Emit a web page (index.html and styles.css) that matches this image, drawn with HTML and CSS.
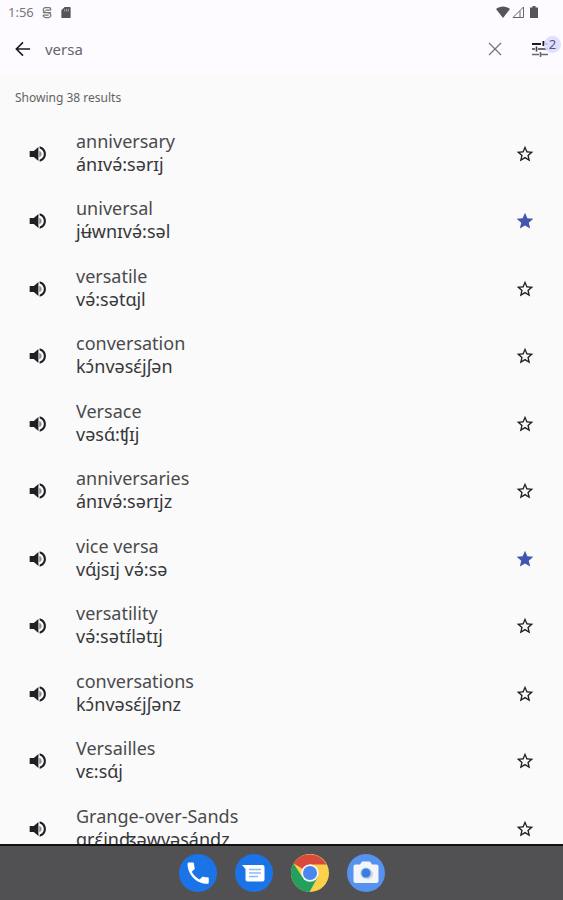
FILE: index.html
```
<!DOCTYPE html>
<html lang="en">
<head>
<meta charset="utf-8">
<meta name="viewport" content="width=device-width, initial-scale=1">
<title>Dictionary search</title>
<link rel="stylesheet" href="styles.css">
</head>
<body>
<svg class="defs" aria-hidden="true">
  <symbol id="speaker" viewBox="0 0 24 24"><path d="M2 8.500v7h5l5.500 5V3.500L7 8.500H2z"/><path opacity=".5" d="M13.500 7.970v8.050A4.500 4.500 0 0 0 16.500 12a4.500 4.500 0 0 0-3-4.030z"/><path d="M14 2.730v2.560c2.890.860 5 3.540 5 6.710s-2.110 5.850-5 6.710v2.560c4.410-.910 7.500-4.490 7.500-9.270s-3.090-8.360-7.500-9.270z"/></symbol>
  <symbol id="star" viewBox="0 0 24 24"><path d="M22 9.240l-7.190-.620L12 2 9.190 8.630 2 9.240l5.460 4.730L5.820 21 12 17.270 18.180 21l-1.630-7.030L22 9.240zM12 15.400l-3.760 2.270 1-4.280-3.320-2.880 4.380-.380L12 6.100l1.710 4.040 4.380.380-3.320 2.880 1 4.280L12 15.400z"/></symbol>
  <symbol id="star-full" viewBox="0 0 24 24"><path d="M12 17.270L18.180 21l-1.640-7.030L22 9.240l-7.190-.610L12 2 9.190 8.630 2 9.240l5.460 4.730L5.820 21z"/></symbol>
</svg>
<div class="screen">
  <header class="top">
    <div class="status">
      <span class="clock">1:56</span>
      <svg class="status-icon" viewBox="0 0 12 14" fill="none" stroke="#77767a" stroke-width="1.500"><path d="M10.500 4V3a2 2 0 0 0-2-2H4a2.500 2.500 0 0 0-2.500 2.500C1.500 6 3 7 6 7s4.500 1 4.500 3.500A2.500 2.500 0 0 1 8 13H4a2.500 2.500 0 0 1-2.500-2.500V10M4 4h6.500M1.500 10H8M1 7h10"/></svg>
      <svg class="status-icon card" viewBox="0 0 12 14" fill="#55545a"><path d="M4.500 1H10a1 1 0 0 1 1 1v10a1 1 0 0 1-1 1H2a1 1 0 0 1-1-1V4.500z"/><path fill="#aaa9ad" d="M4 3.500h1V6H4zM6 3h1v3H6zM8 3h1v3H8z"/></svg>
      <span class="status-right">
        <svg width="14" height="12" viewBox="0 0 14 12" fill="#55545a"><path d="M0 3C4-.500 10-.500 14 3L7 12z"/></svg>
        <svg width="12" height="12" viewBox="0 0 12 12" fill="none" stroke="#66656a"><path d="M1 11.500L11.500 1v10.500zM8 5v6"/></svg>
        <svg width="8" height="12" viewBox="0 0 8 12" fill="#55545a"><path d="M2.500 0h3v1.500H8V12H0V1.500h2.500z"/></svg>
      </span>
    </div>
    <form class="search" role="search">
      <button class="icon-btn" type="button" aria-label="Back"><svg width="16" height="16" viewBox="0 0 18 18" fill="none" stroke="#1b1b1f" stroke-width="1.800"><path d="M17 9H2.500M9 1.500L1.500 9 9 16.500"/></svg></button>
      <input class="query" type="text" aria-label="Search words" value="versa">
      <button class="icon-btn" type="button" aria-label="Clear"><svg width="14" height="14" viewBox="0 0 14 14" fill="none" stroke="#77767a" stroke-width="1.300"><path d="M1 1l12 12M13 1L1 13"/></svg></button>
      <button class="icon-btn filter" type="button" aria-label="Filters, 2 active"><svg width="18" height="16" viewBox="0 0 18 16" fill="none"><path stroke="#1b1b1f" stroke-width="2" d="M1 3h9M12.500 0v5M12.500 3H17"/><path stroke="#3b3b3f" stroke-width="1.600" d="M1 8h3M5.500 5.500v5M7 8h10"/><path stroke="#69696d" stroke-width="1.600" d="M1 13.500h7M9.500 11v5M9.500 13.500H17"/></svg><span class="badge">2</span></button>
    </form>
  </header>
  <main class="results">
    <p class="count">Showing 38 results</p>
    <ul class="list">
      <li class="row"><button class="icon-btn" aria-label="Play anniversary"><svg class="glyph"><use href="#speaker"/></svg></button><div class="entry"><span>anniversary</span><span class="ipa">ánɪvə́:sərɪj</span></div><button class="icon-btn" aria-label="Save anniversary"><svg class="glyph"><use href="#star"/></svg></button></li>
      <li class="row"><button class="icon-btn" aria-label="Play universal"><svg class="glyph"><use href="#speaker"/></svg></button><div class="entry"><span>universal</span><span class="ipa">jʉ́wnɪvə́:səl</span></div><button class="icon-btn saved" aria-label="Unsave universal"><svg class="glyph"><use href="#star-full"/></svg></button></li>
      <li class="row"><button class="icon-btn" aria-label="Play versatile"><svg class="glyph"><use href="#speaker"/></svg></button><div class="entry"><span>versatile</span><span class="ipa">və́:sətɑjl</span></div><button class="icon-btn" aria-label="Save versatile"><svg class="glyph"><use href="#star"/></svg></button></li>
      <li class="row"><button class="icon-btn" aria-label="Play conversation"><svg class="glyph"><use href="#speaker"/></svg></button><div class="entry"><span>conversation</span><span class="ipa">kɔ́nvəsɛ́jʃən</span></div><button class="icon-btn" aria-label="Save conversation"><svg class="glyph"><use href="#star"/></svg></button></li>
      <li class="row"><button class="icon-btn" aria-label="Play Versace"><svg class="glyph"><use href="#speaker"/></svg></button><div class="entry"><span>Versace</span><span class="ipa">vəsɑ́:ʧɪj</span></div><button class="icon-btn" aria-label="Save Versace"><svg class="glyph"><use href="#star"/></svg></button></li>
      <li class="row"><button class="icon-btn" aria-label="Play anniversaries"><svg class="glyph"><use href="#speaker"/></svg></button><div class="entry"><span>anniversaries</span><span class="ipa">ánɪvə́:sərɪjz</span></div><button class="icon-btn" aria-label="Save anniversaries"><svg class="glyph"><use href="#star"/></svg></button></li>
      <li class="row"><button class="icon-btn" aria-label="Play vice versa"><svg class="glyph"><use href="#speaker"/></svg></button><div class="entry"><span>vice versa</span><span class="ipa">vɑ́jsɪj və́:sə</span></div><button class="icon-btn saved" aria-label="Unsave vice versa"><svg class="glyph"><use href="#star-full"/></svg></button></li>
      <li class="row"><button class="icon-btn" aria-label="Play versatility"><svg class="glyph"><use href="#speaker"/></svg></button><div class="entry"><span>versatility</span><span class="ipa">və́:sətɪ́lətɪj</span></div><button class="icon-btn" aria-label="Save versatility"><svg class="glyph"><use href="#star"/></svg></button></li>
      <li class="row"><button class="icon-btn" aria-label="Play conversations"><svg class="glyph"><use href="#speaker"/></svg></button><div class="entry"><span>conversations</span><span class="ipa">kɔ́nvəsɛ́jʃənz</span></div><button class="icon-btn" aria-label="Save conversations"><svg class="glyph"><use href="#star"/></svg></button></li>
      <li class="row"><button class="icon-btn" aria-label="Play Versailles"><svg class="glyph"><use href="#speaker"/></svg></button><div class="entry"><span>Versailles</span><span class="ipa">vɛ:sɑ́j</span></div><button class="icon-btn" aria-label="Save Versailles"><svg class="glyph"><use href="#star"/></svg></button></li>
      <li class="row"><button class="icon-btn" aria-label="Play Grange-over-Sands"><svg class="glyph"><use href="#speaker"/></svg></button><div class="entry"><span>Grange-over-Sands</span><span class="ipa">grɛ́jnʤəwvəsándz</span></div><button class="icon-btn" aria-label="Save Grange-over-Sands"><svg class="glyph"><use href="#star"/></svg></button></li>
    </ul>
  </main>
  <nav class="dock" aria-label="Apps">
    <a href="#" aria-label="Phone"><svg class="app" viewBox="0 0 38 38"><circle cx="19" cy="19" r="19" fill="#1b73e8"/><path fill="#fff" transform="translate(5 5) scale(1.180)" d="M6.620 10.790a15.150 15.150 0 0 0 6.590 6.590l2.200-2.200a1 1 0 0 1 1.020-.240c1.120.370 2.330.570 3.570.570a1 1 0 0 1 1 1V20a1 1 0 0 1-1 1C10.610 21 3 13.390 3 4a1 1 0 0 1 1-1h3.500a1 1 0 0 1 1 1c0 1.250.200 2.450.570 3.570a1 1 0 0 1-.250 1.020z"/></svg></a>
    <a href="#" aria-label="Messages"><svg class="app" viewBox="0 0 38 38"><circle cx="19" cy="19" r="19" fill="#1b73e8"/><path fill="#fff" d="M7 11h20.500a2 2 0 0 1 2 2v12.500a2 2 0 0 1-2 2h-15a2 2 0 0 1-2-2V15z"/><path stroke="#8db8f3" stroke-width="1.500" d="M14 15.500h12M14 19h12M14 22.500h9"/></svg></a>
    <a href="#" aria-label="Chrome"><svg class="app" viewBox="0 0 38 38"><circle cx="19" cy="19" r="19" fill="#fbd04b"/><path fill="#d94a3d" d="M19 19L2.550 9.500A19 19 0 0 1 35.450 10.500H19z"/><path fill="#23a05d" d="M2.550 9.500A19 19 0 0 0 18.500 38L26.500 23.500 19 19 11 22.500z"/><circle cx="19" cy="19" r="8.700" fill="#f4f4f4"/><circle cx="19" cy="19" r="7" fill="#4986ee"/></svg></a>
    <a href="#" aria-label="Camera"><svg class="app" viewBox="0 0 38 38"><circle cx="19" cy="19" r="19" fill="#5792ee"/><path fill="#f3f5f8" d="M8.500 10.500H13l2-3h8l2 3h4.500a2 2 0 0 1 2 2V27a2 2 0 0 1-2 2h-21a2 2 0 0 1-2-2V12.500a2 2 0 0 1 2-2z"/><path fill="#d2d9e4" d="M23.500 15.500l2.500 3c.500 4-2 6.500-5 7l-3-1.500z"/><circle cx="19" cy="19" r="5.600" fill="#a9c9f5"/><circle cx="19" cy="19" r="4.500" fill="#3c7edb"/></svg></a>
  </nav>
</div>
</body>
</html>
```
FILE: styles.css
```
* {
  box-sizing: border-box;
}

body {
  margin: 0;
  background: #fafafa;
  color: #4a4a4d;
  font-family: "Noto Sans", "Open Sans", sans-serif;
}

button {
  border: 0;
  padding: 0;
  background: none;
  color: #1f1f24;
  cursor: pointer;
}

svg {
  display: block;
}

.defs {
  display: none;
}

.screen {
  display: flex;
  flex-direction: column;
  height: 100vh;
}

.top {
  background: #fdfbff;
}

.status {
  display: flex;
  align-items: center;
  gap: 8px;
  height: 24px;
  padding: 0 25px 0 8px;
}

.clock {
  color: #77767a;
  font-size: 13px;
  line-height: 24px;
}

.status-icon {
  width: 10px;
  height: 13px;
}

.card {
  width: 12px;
}

.status-right {
  display: flex;
  gap: 2px;
  margin-left: auto;
}

.status-right svg:last-child {
  margin-left: 4px;
}

.search {
  display: flex;
  align-items: center;
  height: 52px;
  padding: 0 4px 2px;
}

.icon-btn {
  display: grid;
  flex: none;
  place-items: center;
  width: 38px;
  height: 38px;
}

.query {
  flex: 1;
  min-width: 0;
  border: 0;
  padding: 0 3px;
  background: none;
  color: #66656a;
  font: 15px/24px "Noto Sans", sans-serif;
  outline: 0;
}

.filter {
  position: relative;
  margin-left: 7px;
}

.badge {
  position: absolute;
  top: 6px;
  right: -2px;
  width: 17px;
  height: 17px;
  border-radius: 50%;
  background: rgb(218 220 255 / 90%);
  color: #55576f;
  font: 13px/17px "Noto Sans", sans-serif;
  text-align: center;
}

.results {
  flex: 1;
  min-height: 0;
  overflow: hidden;
}

.count {
  margin: 0;
  padding: 13px 15px;
  color: #626266;
  font-size: 12px;
  line-height: 18px;
}

.list {
  display: grid;
  grid-auto-rows: minmax(7.5vh, max-content);
  margin: 0;
  padding: 0;
  list-style: none;
}

.row {
  display: flex;
  align-items: center;
  padding: 0 19px;
}

.entry {
  display: flex;
  flex: 1;
  flex-direction: column;
  padding: 0 19px 2px;
  font-size: 18px;
  line-height: 23px;
}

.ipa {
  color: #38383b;
}

.glyph {
  width: 20px;
  height: 20px;
  fill: currentColor;
}

.saved {
  color: #4355b0;
}

.dock {
  display: flex;
  flex: none;
  align-items: center;
  justify-content: center;
  gap: 18px;
  height: 56px;
  border-top: 2px solid #111;
  background: #515154;
}

.app {
  width: 38px;
  height: 38px;
}
```
